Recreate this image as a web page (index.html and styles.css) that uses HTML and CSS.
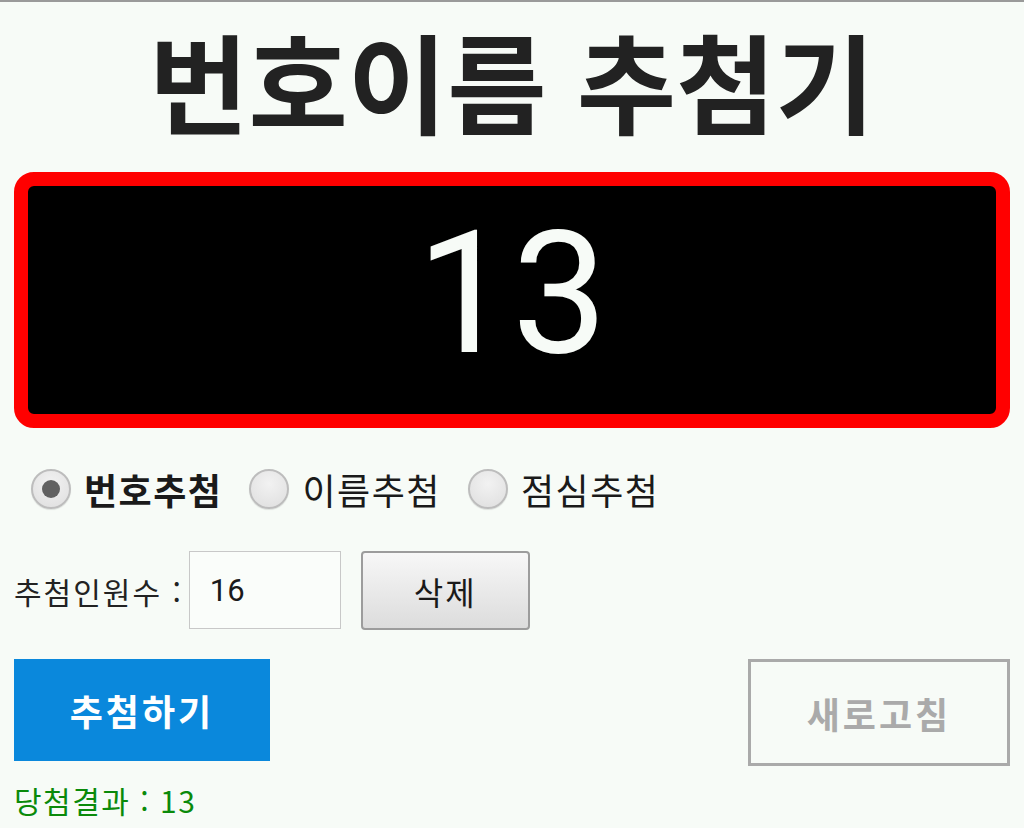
FILE: index.html
```html
<!DOCTYPE html>
<html lang="ko">
<head>
<meta charset="utf-8">
<title>번호이름 추첨기</title>
<link rel="stylesheet" href="styles.css">
</head>
<body>
<div class="page">
  <h1 class="title">번호이름 추첨기</h1>
  <div class="display"><span class="display-num">13</span></div>
  <div class="modes">
    <label class="mode"><span class="radio checked"></span><span class="mode-text bold">번호추첨</span></label>
    <label class="mode"><span class="radio"></span><span class="mode-text">이름추첨</span></label>
    <label class="mode"><span class="radio"></span><span class="mode-text">점심추첨</span></label>
  </div>
  <div class="count-row">
    <span class="count-label">추첨인원수 :</span>
    <div class="count-input">16</div>
    <div class="del-btn">삭제</div>
  </div>
  <div class="action-row">
    <div class="draw-btn">추첨하기</div>
    <div class="refresh-btn">새로고침</div>
  </div>
  <div class="result">당첨결과 : 13</div>
</div>
</body>
</html>
```
FILE: styles.css
```css
html, body {
  margin: 0;
  padding: 0;
  background: #f7fbf7;
}
body {
  font-family: "Noto Sans CJK KR", "Noto Sans", sans-serif;
  color: #222;
  border-top: 2px solid #9a9a9a;
  height: 826px;
  overflow: hidden;
}
.page {
  display: flex;
  flex-direction: column;
}
.title {
  margin: 0;
  height: 170px;
  line-height: 154px;
  text-align: center;
  font-size: 108px;
  font-weight: 700;
  letter-spacing: 0;
  color: #222;
}
.display {
  box-sizing: border-box;
  margin: 0 14px;
  height: 256px;
  border: 14px solid #ff0000;
  border-radius: 20px;
  background: #000;
  display: flex;
  align-items: center;
  justify-content: center;
  padding-bottom: 12px;
}
.display-num {
  font-family: Roboto, "Noto Sans", sans-serif;
  font-size: 170px;
  font-weight: 400;
  color: #f7fbf7;
  line-height: 1;
}
.modes {
  margin-top: 40px;
  padding-left: 31px;
  display: flex;
  align-items: center;
  gap: 27px;
  height: 42px;
}
.mode {
  display: flex;
  align-items: center;
  gap: 13px;
}
.radio {
  width: 36px;
  height: 36px;
  border: 2px solid #bdbdbd;
  border-radius: 50%;
  background: radial-gradient(circle at 50% 35%, #f2f2f2 0%, #dedede 100%);
  box-shadow: 0 1px 1px rgba(0,0,0,0.1);
  display: flex;
  align-items: center;
  justify-content: center;
}
.radio.checked::after {
  content: "";
  width: 18px;
  height: 18px;
  border-radius: 50%;
  background: #616161;
}
.mode-text {
  font-size: 36px;
  letter-spacing: 1.5px;
  color: #1a1a1a;
}
.mode-text.bold {
  font-weight: 700;
}
.count-row {
  margin-top: 41px;
  padding-left: 14px;
  display: flex;
  align-items: center;
  height: 79px;
}
.count-label {
  font-size: 30px;
  letter-spacing: 2px;
  margin-right: 6px;
}
.count-input {
  box-sizing: border-box;
  width: 152px;
  height: 78px;
  border: 1px solid #c8c8c8;
  background: #fafdfa;
  padding-left: 20px;
  display: flex;
  align-items: center;
  font-family: Roboto, sans-serif;
  font-size: 31px;
  color: #1a1a1a;
  align-self: flex-start;
}
.del-btn {
  box-sizing: border-box;
  margin-left: 20px;
  width: 169px;
  height: 79px;
  border: 2px solid #9c9c9c;
  border-radius: 4px;
  background: linear-gradient(#f7f7f7, #dcdcdc);
  display: flex;
  align-items: center;
  justify-content: center;
  font-size: 32px;
  letter-spacing: 2px;
  color: #1a1a1a;
}
.action-row {
  margin-top: 29px;
  padding: 0 14px;
  display: flex;
  justify-content: space-between;
  align-items: flex-start;
}
.draw-btn {
  width: 256px;
  height: 102px;
  background: #0a88dc;
  color: #fff;
  font-size: 36px;
  font-weight: 700;
  letter-spacing: 3px;
  display: flex;
  align-items: center;
  justify-content: center;
}
.refresh-btn {
  box-sizing: border-box;
  width: 262px;
  height: 107px;
  border: 3px solid #aaaaaa;
  color: #aaaaaa;
  font-size: 36px;
  font-weight: 700;
  letter-spacing: 3px;
  display: flex;
  align-items: center;
  justify-content: center;
}
.result {
  margin-top: 14px;
  padding-left: 14px;
  font-size: 30px;
  line-height: 40px;
  letter-spacing: 1.5px;
  color: #0a8a0a;
}
```
